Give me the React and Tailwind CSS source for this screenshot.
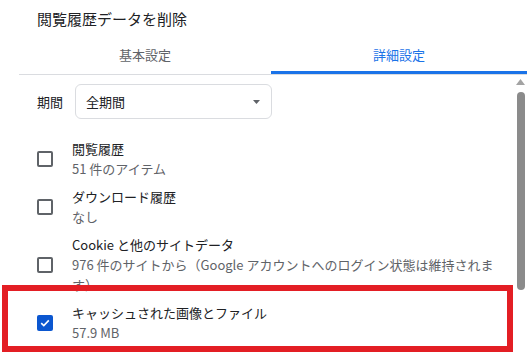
import React from "react";

const FONT = { fontFamily: '"Noto Sans CJK JP", "Noto Sans", sans-serif' };

function Box({ checked }) {
  if (checked) {
    return (
      <div className="w-4 h-4 rounded-[2px] bg-[#0b57d0] flex items-center justify-center shrink-0">
        <svg width="12" height="12" viewBox="0 0 12 12">
          <path d="M2.2 6.2 L4.8 8.6 L9.8 3.4" fill="none" stroke="white" strokeWidth="1.6" />
        </svg>
      </div>
    );
  }
  return <div className="w-4 h-4 rounded-[2px] border-2 border-[#5f6368] shrink-0" />;
}

function Row({ checked, label, sub }) {
  return (
    <div className="flex items-center pl-[37px] pr-5 gap-[19px]">
      <Box checked={checked} />
      <div className="flex-1 text-[13px] leading-[20px]">
        <div className="text-[#202124]">{label}</div>
        <div className="text-[#5f6368]">{sub}</div>
      </div>
    </div>
  );
}

export default function App() {
  return (
    <div className="relative w-[527px] h-[354px] overflow-hidden bg-white flex flex-col" style={FONT}>
      <div className="h-[38px] flex items-center pl-[37px] text-[15px] text-[#202124]">
        閲覧履歴データを削除
      </div>
      <div className="ml-[19px] h-[37px] flex border-b border-[#dadce0]">
        <div className="w-[252px] flex flex-col">
          <div className="flex-1 flex items-center justify-center text-[13px] text-[#5f6368]">基本設定</div>
          <div className="h-[3px]" />
        </div>
        <div className="flex-1 flex flex-col">
          <div className="flex-1 flex items-center justify-center text-[13px] text-[#1a73e8]">詳細設定</div>
          <div className="h-[3px] bg-[#1a73e8]" />
        </div>
      </div>
      <div className="flex-1 flex min-h-0">
        <div className="flex-1 flex flex-col">
          <div className="mt-[9px] flex items-center pl-[37px] gap-[12px]">
            <span className="text-[13px] text-[#202124]">期間</span>
            <div className="w-[197px] h-[35px] rounded-[6px] border border-[#dadce0] flex items-center justify-between pl-[10px] pr-[11px]">
              <span className="text-[13px] text-[#202124]">全期間</span>
              <svg width="7" height="4" viewBox="0 0 7 4">
                <path d="M0 0 L7 0 L3.5 4 Z" fill="#5f6368" />
              </svg>
            </div>
          </div>
          <div className="mt-[20px] flex flex-col gap-[8px]">
            <Row label="閲覧履歴" sub="51 件のアイテム" />
            <Row label="ダウンロード履歴" sub="なし" />
            <Row
              label="Cookie と他のサイトデータ"
              sub="976 件のサイトから（Google アカウントへのログイン状態は維持されます）"
            />
            <Row checked label="キャッシュされた画像とファイル" sub="57.9 MB" />
          </div>
        </div>
        <div className="w-[12px] flex flex-col items-center pt-[4px] pr-[1px]">
          <svg width="9" height="6" viewBox="0 0 9 6">
            <path d="M4.5 0 L9 6 L0 6 Z" fill="#a3a3a3" />
          </svg>
          <div className="mt-[7px] w-[8px] h-[198px] rounded-full bg-[#8b8b8b]" />
        </div>
      </div>
      <div className="absolute left-[2px] top-[285px] w-[511px] h-[67px] border-[6px] border-[#e31e24]" />
    </div>
  );
}
